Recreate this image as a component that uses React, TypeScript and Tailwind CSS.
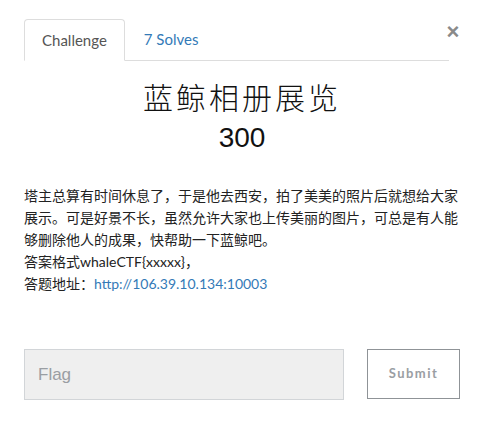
export default function App() {
  return (
    <div className="w-[478px] h-[422px] bg-white pt-[19px] pl-[24px] pr-[18px] font-['Lato','Noto_Sans_CJK_SC',sans-serif]">
      <div className="flex items-start">
        <div className="flex flex-1 border-b border-[#dddddd] h-[42px] mr-[-4px]">
          <div className="h-[42px] px-[17px] border border-b-white border-[#dddddd] rounded-t-[4px] bg-white flex items-center text-[15px] text-[#555555] -mb-px">
            Challenge
          </div>
          <div className="h-[41px] pl-[19px] flex items-center text-[15px] text-[#337ab7]">
            7 Solves
          </div>
        </div>
        <button className="ml-[1px] mt-[3px] w-[14px] text-[22px] leading-[20px] font-bold text-[#8a8a8a] font-['Liberation_Sans',sans-serif]">
          ×
        </button>
      </div>

      <h3 className="mt-[18px] text-center text-[30px] leading-[34px] tracking-[3px] text-[#111111] font-light font-['Noto_Sans_CJK_SC',sans-serif]">
        蓝鲸相册展览
      </h3>
      <h4 className="mt-[9px] text-center text-[28px] leading-[32px] text-[#111111] font-['Liberation_Sans',sans-serif]">
        300
      </h4>

      <div className="mt-[31px] text-[14px] leading-[22px] text-[#222222]">
        <p>
          塔主总算有时间休息了，于是他去西安，拍了美美的照片后就想给大家展示。可是好景不长，虽然允许大家也上传美丽的图片，可总是有人能够删除他人的成果，快帮助一下蓝鲸吧。
        </p>
        <p>答案格式whaleCTF{"{"}xxxxx{"}"}，</p>
        <p>
          答题地址：<span className="text-[#337ab7]">http://106.39.10.134:10003</span>
        </p>
      </div>

      <div className="mt-[54px] flex items-start">
        <div className="w-[320px] h-[51px] bg-[#efefef] border border-[#d2d5d8] flex items-center pl-[13px] text-[17px] text-[#9a9ea3] font-['Liberation_Sans',sans-serif]">
          Flag
        </div>
        <button className="ml-[23px] w-[93px] h-[50px] border border-[#8f9397] text-[13px] font-bold tracking-[1.5px] text-[#9a9ea3]">
          Submit
        </button>
      </div>
    </div>
  );
}
